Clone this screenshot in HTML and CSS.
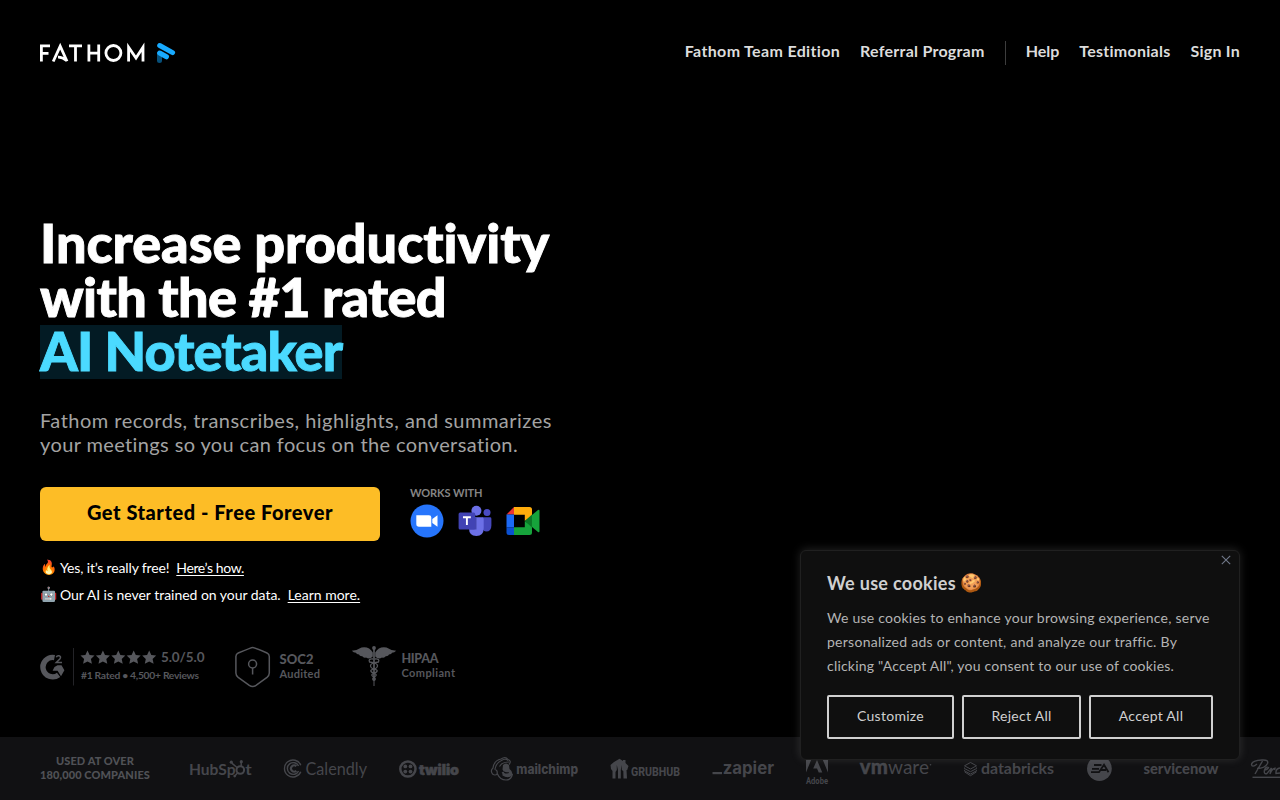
FILE: index.html
```html
<!DOCTYPE html>
<html lang="en">
<head>
<meta charset="utf-8">
<title>Fathom AI Notetaker</title>
<link rel="stylesheet" href="styles.css">
</head>
<body>
<div class="page">
  <header class="header">
    <svg class="brand" width="136" height="22" viewBox="40 42 136 22" role="img" aria-label="Fathom">
      <g fill="none" stroke="#fff" stroke-width="2.8">
        <path d="M41.4 61.5V45.8H50M41.4 53.4H48.5"/>
        <path d="M53.2 61.5L60.2 46.2L67 61.3M58 57.2Q62 57 66.8 60.6"/>
        <path d="M69 45.8H82M75.5 45.7V61.5"/>
        <path d="M88.9 44.5V61.5M98.7 44.5V61.5M88.9 53.2H98.7"/>
        <circle cx="113.4" cy="53" r="7.5"/>
        <path d="M128.6 61.5V47.3L136 58L143 47.3V61.5"/>
      </g>
      <path d="M157 52H162V60.5A2.5 2.5 0 0 1 157 60.5Z" fill="#07507a"/>
      <g stroke="#18aaff" stroke-width="5" stroke-linecap="round">
        <path d="M159.7 45.5L172.6 52.6"/><path d="M159.7 53L166.5 56.8"/>
      </g>
    </svg>
    <nav class="nav">
      <a class="nav-team">Fathom Team Edition</a>
      <a class="nav-ref">Referral Program</a>
      <i class="nav-rule"></i>
      <a class="nav-help">Help</a>
      <a class="nav-test">Testimonials</a>
      <a class="nav-sign">Sign In</a>
    </nav>
  </header>

  <main class="hero">
    <h1 class="title">
      <span class="title-line t1">Increase productivity</span>
      <span class="title-line t2">with the #1 rated</span>
      <span class="title-line t3">AI Notetaker</span>
    </h1>
    <p class="lead"><span class="l1">Fathom records, transcribes, highlights, and summarizes</span><br><span class="l2">your meetings so you can focus on the conversation.</span></p>
    <div class="actions">
      <a class="cta"><span>Get Started - Free Forever</span></a>
      <div class="works">
        <div class="works-label">WORKS WITH</div>
        <div class="works-icons">
          <svg width="34" height="34" viewBox="0 0 34 34"><circle cx="17" cy="17" r="16.5" fill="#2675fc"/><path d="M6.3 11.2H19Q21.3 11.2 21.3 13.5V22.8H9Q6.3 22.8 6.3 20Z" fill="#fff"/><path d="M22.3 15L27.5 11.3V22.7L22.3 19Z" fill="#fff"/></svg>
          <svg width="34" height="34" viewBox="0 0 34 34"><circle cx="29" cy="8.4" r="3.5" fill="#4a4bc4"/><path d="M24 13.3H32Q33.4 13.3 33.4 14.7V21.5Q33.4 27.5 28 27.5Q24 27.5 24 21Z" fill="#4648bc"/><circle cx="18.4" cy="6.8" r="5" fill="#6c70e6"/><path d="M11 13.3H24Q25.7 13.3 25.7 15V24Q25.7 32 18.3 32Q11 32 11 24Z" fill="#6c70e6"/><path d="M11 13.3H18.5V25.5H11.2Z" fill="#4447ae"/><rect x="0.6" y="8.6" width="16.6" height="17" rx="1.5" fill="#4143b4"/><path d="M5 13.2H12.8M8.9 13.2V21" fill="none" stroke="#fff" stroke-width="1.9"/></svg>
          <svg width="34" height="34" viewBox="0 0 34 34"><path d="M0.5 10.5L8 3V10.5Z" fill="#ea3434"/><path d="M0.5 10.5H8V23.5H.5Z" fill="#1c69f5"/><path d="M.5 23.5H8V31H3Q.5 31 .5 28.5Z" fill="#0a50d2"/><path d="M8 3H23.5Q26 3 26 5.5V12L18.8 17V10.8H8Z" fill="#ffad0c"/><path d="M8 23.2H18.8V17L26 22V28.5Q26 31 23.5 31H8Z" fill="#16a33b"/><path d="M18.8 17L26 10.5V23.5Z" fill="#0b7827"/><path d="M26 11L32 6Q33.5 5 33.5 7V27Q33.5 29 32 28L26 23Z" fill="#16a33b"/></svg>
        </div>
      </div>
    </div>
    <div class="notes">
      <div class="note"><span class="emoji">🔥</span><span class="n1">Yes, it’s really free!</span><a class="n2">Here’s how.</a></div>
      <div class="note"><span class="emoji">🤖</span><span class="n3">Our AI is never trained on your data.</span><a class="n4">Learn more.</a></div>
    </div>
    <svg class="badges" width="420" height="46" viewBox="40 644 420 46" fill="#56575c">
      <defs><path id="star" d="M0-7L2.1-2.5 7-1.9 3.4 1.4 4.4 6.3 0 3.9-4.4 6.3-3.4 1.4-7-1.9-2.1-2.5Z"/></defs>
      <path d="M54.5 657.6A9.7 9.7 0 1 0 58.6 674.8" fill="none" stroke="#56575c" stroke-width="5.4"/>
      <path d="M54.5 667L57.5 665.3 61.5 665.3 64.4 670.3 61 676.3 57.6 670.8H52.6Z"/>
      <path d="M56.3 657.3Q57 655.3 59 655.7Q61.6 656.6 59.8 659L56.3 662.4H62" fill="none" stroke="#56575c" stroke-width="1.5"/>
      <path d="M73.5 648V685.5" stroke="#232327"/>
      <use href="#star" x="87.5" y="657.5"/><use href="#star" x="102.9" y="657.5"/><use href="#star" x="118.3" y="657.5"/><use href="#star" x="133.7" y="657.5"/><use href="#star" x="149.2" y="657.5"/>
      <g font-family="Lato, sans-serif" font-weight="700">
        <text x="161" y="662" font-size="13.5" textLength="43.5">5.0/5.0</text>
        <text x="81" y="679" font-size="10.3" textLength="118">#1 Rated • 4,500+ Reviews</text>
        <text x="279.5" y="664" font-size="13" font-weight="900" textLength="34">SOC2</text>
        <text x="279.5" y="678" font-size="11" textLength="40.5">Audited</text>
        <text x="401.5" y="663" font-size="12.5" font-weight="900" textLength="37">HIPAA</text>
        <text x="401.5" y="677" font-size="11" textLength="53.5">Compliant</text>
      </g>
      <g fill="none" stroke="#56575c" stroke-width="1.5">
        <path d="M252.7 647.5Q254 647.5 267 653Q269.3 654 269.3 656.5V673Q269.3 675.5 267 677.3L256 685.3Q252.7 687.5 249.3 685.3L238.2 677.3Q235.9 675.5 235.9 673V656.5Q235.9 654 238.2 653Q251.5 647.5 252.7 647.5Z"/>
        <circle cx="252.6" cy="664" r="4"/><path d="M252.6 668V674.5"/>
        <path d="M374 648V680" stroke-width="1.7"/><path d="M374 680V686" stroke-width="1"/>
        <path d="M373 659Q368 658.5 369.5 662Q378 663 377.5 666Q377 669 371.5 669.8Q369.3 671.5 374 673.2Q378.5 675 374 677.2Q371.5 679 374 680.5" stroke-width="1.3"/>
        <path d="M375 659Q380 658.5 378.5 662Q370 663 370.5 666Q371 669 376.5 669.8Q378.7 671.5 374 673.2Q369.5 675 374 677.2Q376.5 679 374 680.5" stroke-width="1.3"/>
      </g>
      <circle cx="374" cy="648" r="1.9"/>
      <path id="wing" d="M372.8 652.5Q369 646 361.5 647.5Q357 650.5 351.8 650.8Q353.5 652.6 356 652.7Q356.3 654.3 359 654.6Q359.5 656.3 362.3 656.2Q363.5 658.2 366 657.4Q369.5 660 372.8 656.5Z"/>
      <use href="#wing" transform="translate(748 0) scale(-1 1)"/>
    </svg>
  </main>

  <footer class="companies">
    <div class="used"><span class="u1">USED AT OVER</span><span class="u2">180,000 COMPANIES</span></div>
    <svg class="logos" width="1092" height="62" viewBox="188 738 1092 62" fill="#45464b">
      <g fill="none" stroke="#45464b" stroke-width="1.5">
        <circle cx="240.3" cy="770" r="3.8" stroke-width="2"/><path d="M241.2 766V762.5M237 767.5L231.8 763.2M237.5 773L234.8 776"/>
      </g>
      <circle cx="241.3" cy="761.7" r="1.6"/><circle cx="231.3" cy="762.2" r="1.6"/><circle cx="234.7" cy="776.1" r="1.3"/>
      <text x="189" y="775" font-family="Lato, sans-serif" font-weight="700" font-size="16" textLength="46.5" lengthAdjust="spacingAndGlyphs">HubSp</text>
      <text x="245.3" y="775" font-family="Lato, sans-serif" font-weight="700" font-size="16" textLength="6.5" lengthAdjust="spacingAndGlyphs">t</text>

      <g fill="none" stroke="#45464b"><path d="M300.8 765.2A8.5 8.5 0 1 0 300.8 771.8" stroke-width="1.4"/><path d="M298.6 766A5.9 5.9 0 1 0 298.6 771" stroke-width="1.4"/><path d="M296.3 766.3A3.1 3.1 0 1 0 296.3 770.7" stroke-width="2.1"/></g>
      <text x="305.5" y="775" font-family="Lato, sans-serif" font-size="18" textLength="61.5" lengthAdjust="spacingAndGlyphs">Calendly</text>

      <circle cx="407.9" cy="769" r="7.6" fill="none" stroke="#45464b" stroke-width="2.5"/>
      <circle cx="405.3" cy="766.4" r="1.9"/><circle cx="410.5" cy="766.4" r="1.9"/><circle cx="405.3" cy="771.6" r="1.9"/><circle cx="410.5" cy="771.6" r="1.9"/>
      <text x="419" y="774.5" font-family="Inter, sans-serif" font-weight="900" font-size="14" textLength="40" lengthAdjust="spacingAndGlyphs" stroke="#45464b" stroke-width=".6">twilio</text>

      <g fill="none" stroke="#45464b" stroke-width="1.2"><path d="M509 764.5Q512 761 508 759.5Q505.5 756 501 759Q494 760.5 493 768Q490 770.5 492.5 774Q495 776 497.5 774Q500 780 506 780Q511 780 512.5 774"/><path d="M495 769Q496 763 501.5 760.5Q505.5 758 508 760.5M494.5 769.5Q498 770 497 774M509 762Q502 762 499.5 766.5"/><path d="M502.5 772Q505 777.5 510.5 774.5" stroke-width="2"/></g>
      <path d="M503 765Q506 762 509 765L509.5 769Q513.5 772 512 775.5Q508 779 502.5 775.5Q502 772.5 505.5 773.5Q509 774 509 772Q504 773 502.5 769.5Z"/>
      <text x="516.3" y="774" font-family="Inter, sans-serif" font-weight="800" font-size="13" textLength="61.8" lengthAdjust="spacingAndGlyphs">mailchimp</text>

      <path d="M610.5 765L614 762 619.5 758.7 623 761V760H625.5V763L628.5 766 627.2 770H626.5L627 778.5H623.5L623.3 771 621.8 770V765L620.8 770V778.5H618V770L616.8 765V770L615.5 772V778.5H612.5V771L611 769Z"/>
      <text x="631" y="775.8" font-family="Roboto, sans-serif" font-weight="800" font-size="13.2" textLength="49" lengthAdjust="spacingAndGlyphs">GRUBHUB</text>

      <rect x="712.5" y="772" width="9.5" height="2.2"/>
      <text x="722.7" y="774" font-family="Inter, sans-serif" font-weight="700" font-size="17" textLength="51.3" lengthAdjust="spacingAndGlyphs">zapier</text>

      <path d="M806 753H814L806 772.5ZM828 753H820L828 772.5ZM817 760L822.3 772.5H818.7L817 768.5H813.2Z"/>
      <text x="806" y="783.5" font-family="Roboto, sans-serif" font-weight="700" font-size="9.3" textLength="22" lengthAdjust="spacingAndGlyphs">Adobe</text>

      <text x="859.8" y="774" font-family="Lato, sans-serif" font-weight="900" font-size="20" textLength="28" lengthAdjust="spacingAndGlyphs" stroke="#45464b" stroke-width=".4">vm</text>
      <text x="888" y="774" font-family="Lato, sans-serif" font-size="20" textLength="41" lengthAdjust="spacingAndGlyphs">ware</text><circle cx="930.5" cy="764.8" r=".8"/>

      <g fill="none" stroke="#45464b" stroke-width="1"><path d="M964.5 765.8L970.5 762.5 976.5 765.8 970.5 769ZM964.5 767.5V768.5L970.5 771.7 976.5 768.5V767.5M964.5 769.8V770.8L970.5 774 976.5 770.8V769.8M964.5 771.8L970.5 775.7 976.5 771.8"/></g>
      <text x="981" y="774" font-family="Lato, sans-serif" font-weight="700" font-size="16" textLength="73" lengthAdjust="spacingAndGlyphs">databricks</text>

      <circle cx="1099.4" cy="768.6" r="12.4"/>
      <path d="M1094 765H1101.5M1092 768.8H1099M1091 772.2H1099L1104 764.7L1108.5 772.2M1101 770H1106" fill="none" stroke="#111113" stroke-width="1.8"/>
      <text x="1143.5" y="774" font-family="Lato, sans-serif" font-weight="900" font-size="14.5" textLength="75" lengthAdjust="spacingAndGlyphs">servicenow</text>
      <g fill="none" stroke="#45464b" stroke-width="1.4"><path d="M1257 764Q1252 768 1251.5 764.5Q1252 760.5 1262 760Q1269 759.5 1267.5 763.5Q1265 768.5 1257 768.5M1262.5 761L1255 774M1264 770Q1268 769.5 1268.5 767.5Q1266 766 1264.5 770Q1263.5 774.5 1267 773.5L1271.5 768L1270 774Q1272 768.5 1275 768.2L1274.5 770M1280 768Q1275.5 768.5 1276 773.5L1280 773"/><path d="M1252.5 777.3H1280"/></g>
    </svg>
  </footer>

  <section class="cookie">
    <svg class="close" width="10" height="10" viewBox="0 0 10 10"><path d="M.8.8L9.2 9.2M9.2.8L.8 9.2" stroke="#71798a" stroke-width="1.1"/></svg>
    <h2 class="cookie-title"><span>We use cookies</span><span class="cookie-emoji">🍪</span></h2>
    <p class="cookie-text"><span class="c1">We use cookies to enhance your browsing experience, serve</span><br><span class="c2">personalized ads or content, and analyze our traffic. By</span><br><span class="c3">clicking "Accept All", you consent to our use of cookies.</span></p>
    <div class="cookie-buttons"><button>Customize</button><button>Reject All</button><button>Accept All</button></div>
  </section>
</div>
</body>
</html>
```
FILE: styles.css
```css
* { box-sizing: border-box; }
body { margin: 0; background: #000; color: #fff; font-family: Lato, sans-serif; font-variant-ligatures: none; overflow: hidden; }
.page { position: relative; width: 1280px; height: 800px; display: flex; flex-direction: column; overflow: hidden; }
svg { display: block; flex: none; }
span, a { white-space: nowrap; }

.header { flex: none; height: 105px; padding: 0 40px; display: flex; justify-content: space-between; align-items: center; }
.nav { display: flex; gap: 20px; align-items: center; font-size: 16px; font-weight: 700; line-height: 20px; color: #dcdcdc; }
.nav a { padding-bottom: 3px; letter-spacing: .25px; }
.nav .nav-team { letter-spacing: .34px; }
.nav .nav-help { letter-spacing: 0; }
.nav-rule { width: 1px; height: 24px; background: #3d3d3d; }

.hero { flex: none; height: 632px; padding: 112px 40px 0; display: flex; flex-direction: column; align-items: flex-start; }
.title { margin: 0; display: flex; flex-direction: column; align-items: flex-start; font-size: 54px; font-weight: 900; line-height: 51px; -webkit-text-stroke: .9px currentColor; }
.title-line { padding-bottom: 3px; }
.t1 { letter-spacing: -.05px; }
.t2 { letter-spacing: -.65px; }
.t3 { letter-spacing: -.9px; color: #4bdaff; background: #031b24; }
.lead { margin: 29px 0 0; font-size: 20px; line-height: 24px; color: #a3a3a3; }
.l1 { letter-spacing: .48px; }
.l2 { letter-spacing: .38px; }
.actions { display: flex; gap: 30px; margin-top: 31px; }
.cta { width: 340px; height: 54px; padding-bottom: 4px; border-radius: 6px; background: #fdbd26; color: #000; display: flex; align-items: center; justify-content: center; font-size: 20px; font-weight: 900; letter-spacing: .54px; }
.works-label { font-size: 11px; line-height: 11px; padding-bottom: 2px; color: #858585; font-weight: 700; letter-spacing: -.1px; }
.works-icons { display: flex; gap: 14px; margin-top: 4px; }
.notes { margin-top: 13px; }
.note { display: flex; height: 27px; line-height: 27px; font-size: 14px; }
.emoji { width: 20px; font-size: 14px; font-family: "Noto Color Emoji", sans-serif; }
.note a { margin-left: 7px; text-decoration: underline; text-underline-offset: 2px; }
.n1 { letter-spacing: -.15px; }
.note .n2 { letter-spacing: -.38px; }
.n3 { letter-spacing: -.03px; }
.badges { margin-top: 36px; }

.companies { flex: none; height: 63px; background: #111113; padding-left: 40px; display: flex; align-items: flex-end; }
.used { width: 110px; height: 46px; margin-right: 38px; display: flex; flex-direction: column; align-items: center; font-size: 11px; font-weight: 900; line-height: 14px; letter-spacing: .1px; color: #505156; }

.cookie { position: absolute; left: 800px; top: 550px; width: 440px; height: 210px; padding: 21px 26px 20px; border: 1px solid #202020; border-radius: 6px; background: #0f0f0f; box-shadow: 0 -1px 10px rgba(172, 171, 171, .2); color: #d0d0d0; }
.close { position: absolute; right: 8px; top: 4px; }
.cookie-title { margin: 0; display: flex; font-size: 18px; line-height: 22px; font-weight: 700; }
.cookie-title span { letter-spacing: .3px; }
.cookie-emoji { margin-left: 4px; font-family: "Noto Color Emoji", sans-serif; }
.cookie-text { margin: 12px 0 0; font-size: 14px; line-height: 24px; color: #b4b4b4; }
.c1 { letter-spacing: .25px; }
.c2 { letter-spacing: .27px; }
.c3 { letter-spacing: .21px; }
.cookie-buttons { display: grid; grid-template-columns: 127px 119px 124px; gap: 8px; margin-top: 17px; }
.cookie-buttons button { height: 44px; padding: 0 0 3px; border: 2px solid #d0d0d0; border-radius: 2px; background: transparent; color: #d0d0d0; font: 14px Lato, sans-serif; letter-spacing: .28px; }
```
